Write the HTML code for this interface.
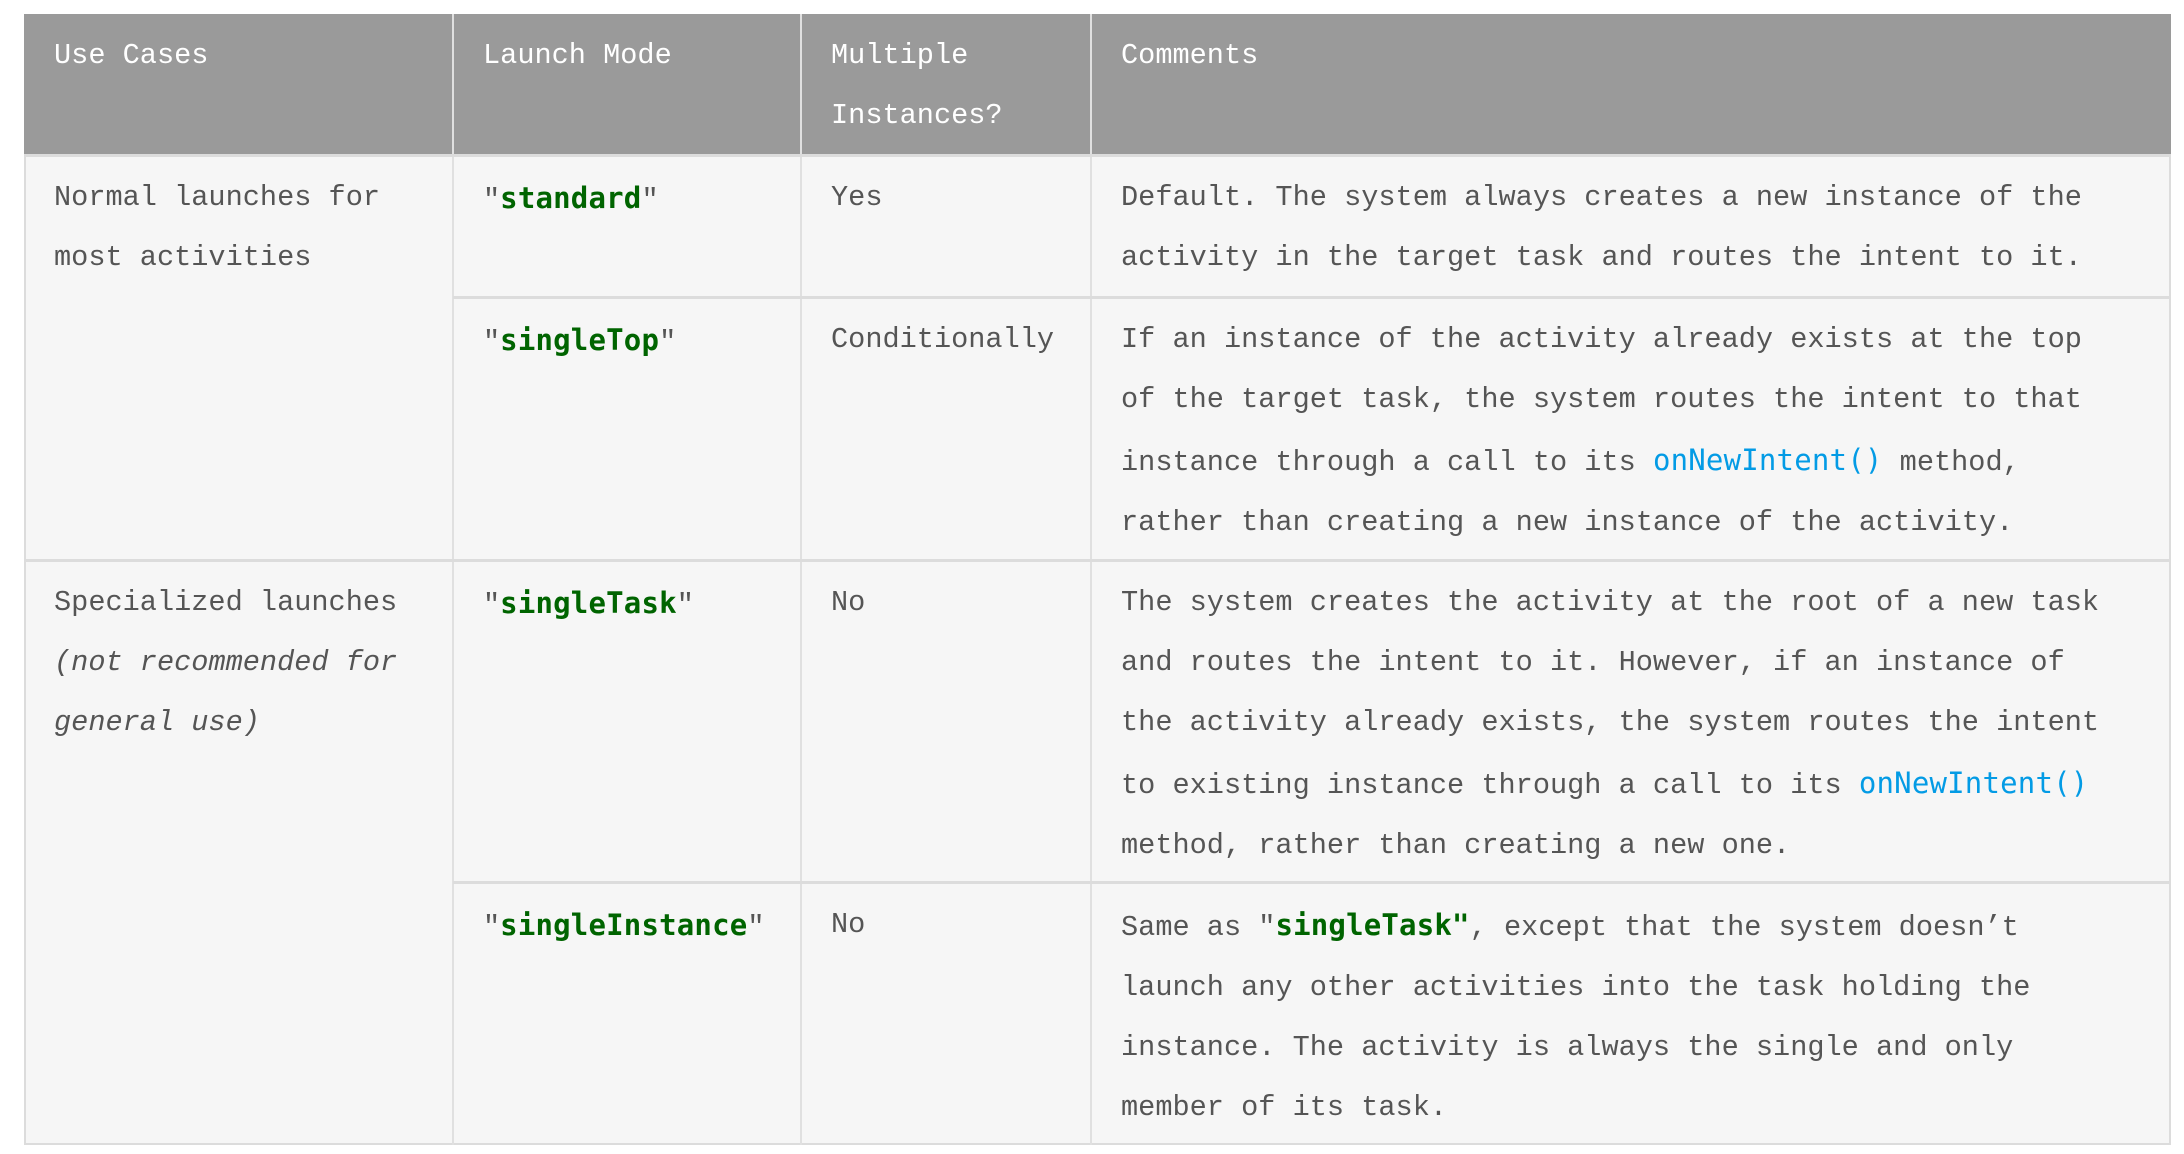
<!DOCTYPE html>
<html><head><meta charset="utf-8"><style>
html,body{margin:0;padding:0;background:#fff;width:2184px;height:1154px;overflow:hidden}
.t{position:absolute;left:24px;top:14px;width:2147px;height:1131px;background:#f6f6f6;border:2px solid #dcdcdc;box-sizing:border-box}
.h{position:absolute;left:24px;top:14px;width:2147px;height:141px;background:#9a9a9a}
.v{position:absolute;width:2px;background:#dcdcdc}
.hl{position:absolute;height:3px;background:#dcdcdc}
.c{position:absolute;font-family:"Liberation Mono",monospace;font-size:28.6px;letter-spacing:0;line-height:60px;color:#555;white-space:nowrap}
.hd{color:#fff}
.g{font-family:"DejaVu Sans Mono",monospace;color:#006400;font-size:29px;letter-spacing:0.2px;font-weight:bold}
.b{font-family:"DejaVu Sans Mono",monospace;color:#039be5;font-size:29px;letter-spacing:0.2px}
i{font-style:italic}
</style></head><body>
<div class="t"></div>
<div class="h"></div>
<div class="v" style="left:452px;top:14px;height:1131px;background:#e0e0e0"></div>
<div class="v" style="left:800px;top:14px;height:1131px;background:#e0e0e0"></div>
<div class="v" style="left:1090px;top:14px;height:1131px;background:#e0e0e0"></div>
<div class="hl" style="left:24px;top:154px;width:2147px"></div>
<div class="hl" style="left:453px;top:296px;width:1718px"></div>
<div class="hl" style="left:24px;top:559px;width:2147px"></div>
<div class="hl" style="left:453px;top:881px;width:1718px"></div>

<div class="c hd" style="left:54px;top:26px">Use Cases</div>
<div class="c hd" style="left:483px;top:26px">Launch Mode</div>
<div class="c hd" style="left:831px;top:26px">Multiple<br>Instances?</div>
<div class="c hd" style="left:1121px;top:26px">Comments</div>

<div class="c" style="left:54px;top:168px">Normal launches for<br>most activities</div>
<div class="c" style="left:483px;top:168px">″<span class="g">standard</span>″</div>
<div class="c" style="left:831px;top:168px">Yes</div>
<div class="c" style="left:1121px;top:168px">Default. The system always creates a new instance of the<br>activity in the target task and routes the intent to it.</div>

<div class="c" style="left:483px;top:310px">″<span class="g">singleTop</span>″</div>
<div class="c" style="left:831px;top:310px">Conditionally</div>
<div class="c" style="left:1121px;top:310px">If an instance of the activity already exists at the top<br>of the target task, the system routes the intent to that<br>instance through a call to its <span class="b">onNewIntent()</span> method,<br>rather than creating a new instance of the activity.</div>

<div class="c" style="left:54px;top:573px">Specialized launches<br><i>(not recommended for<br>general use)</i></div>
<div class="c" style="left:483px;top:573px">″<span class="g">singleTask</span>″</div>
<div class="c" style="left:831px;top:573px">No</div>
<div class="c" style="left:1121px;top:573px">The system creates the activity at the root of a new task<br>and routes the intent to it. However, if an instance of<br>the activity already exists, the system routes the intent<br>to existing instance through a call to its <span class="b">onNewIntent()</span><br>method, rather than creating a new one.</div>

<div class="c" style="left:483px;top:895px">″<span class="g">singleInstance</span>″</div>
<div class="c" style="left:831px;top:895px">No</div>
<div class="c" style="left:1121px;top:895px">Same as ″<span class="g">singleTask"</span>, except that the system doesn’t<br>launch any other activities into the task holding the<br>instance. The activity is always the single and only<br>member of its task.</div>
</body></html>
